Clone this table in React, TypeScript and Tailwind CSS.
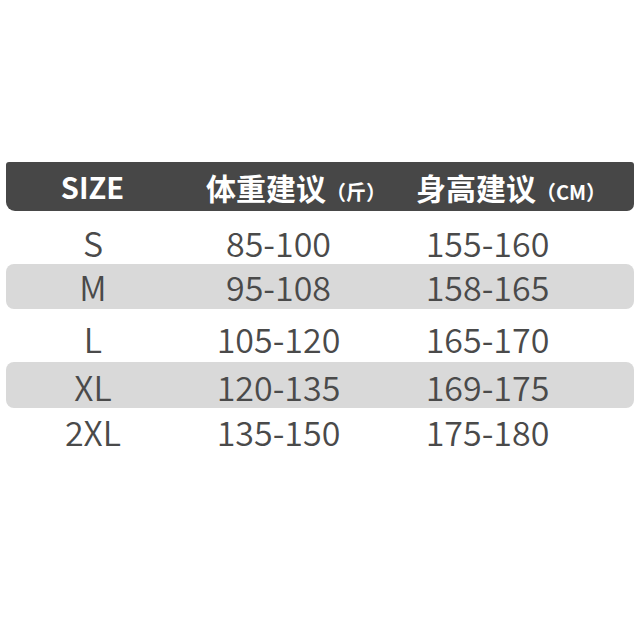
export default function App() {
  const rows = [
    { size: "S", weight: "85-100", height: "155-160", shade: false, pad: "pt-[11px]", h: "h-[53px]" },
    { size: "M", weight: "95-108", height: "158-165", shade: true, pad: "", h: "h-[45px]" },
    { size: "L", weight: "105-120", height: "165-170", shade: false, pad: "pt-[7px]", h: "h-[53px]" },
    { size: "XL", weight: "120-135", height: "169-175", shade: true, pad: "pt-[3px]", h: "h-[46px]" },
    { size: "2XL", weight: "135-150", height: "175-180", shade: false, pad: "", h: "h-[48px]" },
  ];

  return (
    <div
      className="w-[635px] h-[635px] bg-white pt-[162px] pl-[6px] pr-px"
      style={{ fontFamily: '"Noto Sans CJK SC", "Noto Sans", sans-serif' }}
    >
      {/* Header */}
      <div className="flex items-center h-[49px] bg-[#474747] text-white font-bold rounded-[3px] rounded-bl-[9px] rounded-br-[7px]">
        <div className="w-[173px] text-center text-[29px] leading-none">SIZE</div>
        <div className="w-[234px] text-center text-[30px] leading-none whitespace-nowrap">
          体重建议<span className="text-[20px]">（斤）</span>
        </div>
        <div className="w-[196px] text-center text-[30px] leading-none whitespace-nowrap">
          身高建议<span className="text-[20px]">（CM）</span>
        </div>
      </div>

      {/* Rows */}
      {rows.map((r) => (
        <div
          key={r.size}
          className={`flex items-center ${r.h} ${r.pad} text-[34px] leading-none font-[350] text-[#4a4a4a] ${
            r.shade ? "bg-[#d9d9d9] rounded-[8px]" : ""
          }`}
        >
          <div className="w-[174px] text-center">{r.size}</div>
          <div className="w-[197px] text-center">{r.weight}</div>
          <div className="w-[221px] text-center">{r.height}</div>
        </div>
      ))}
    </div>
  );
}
